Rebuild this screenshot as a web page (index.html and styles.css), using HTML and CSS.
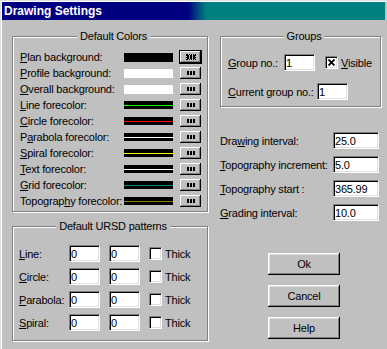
FILE: index.html
```html
<!DOCTYPE html>
<html lang="en">
<head>
    <meta charset="UTF-8">
    <title>Drawing Settings</title>
    <link rel="stylesheet" href="styles.css">
</head>
<body>
    <div class="dialog">
        <div class="titlebar">Drawing Settings</div>
        <div class="dialog-body">
            <div class="col-left">
                <fieldset class="group colors">
                    <legend>Default Colors</legend>
                    <div class="color-row"><span class="lbl"><u>P</u>lan background:</span><span class="swatch black"></span><button class="dots default"><span class="focus"><i></i><i></i><i></i></span></button></div>
                    <div class="color-row"><span class="lbl"><u>P</u>rofile background:</span><span class="swatch white"></span><button class="dots"><i></i><i></i><i></i></button></div>
                    <div class="color-row"><span class="lbl"><u>O</u>verall background:</span><span class="swatch white"></span><button class="dots"><i></i><i></i><i></i></button></div>
                    <div class="color-row"><span class="lbl"><u>L</u>ine forecolor:</span><span class="swatch line green"></span><button class="dots"><i></i><i></i><i></i></button></div>
                    <div class="color-row"><span class="lbl"><u>C</u>ircle forecolor:</span><span class="swatch line red"></span><button class="dots"><i></i><i></i><i></i></button></div>
                    <div class="color-row"><span class="lbl">P<u>a</u>rabola forecolor:</span><span class="swatch line wht"></span><button class="dots"><i></i><i></i><i></i></button></div>
                    <div class="color-row"><span class="lbl"><u>S</u>piral forecolor:</span><span class="swatch line yellow"></span><button class="dots"><i></i><i></i><i></i></button></div>
                    <div class="color-row"><span class="lbl"><u>T</u>ext forecolor:</span><span class="swatch line wht"></span><button class="dots"><i></i><i></i><i></i></button></div>
                    <div class="color-row"><span class="lbl"><u>G</u>rid forecolor:</span><span class="swatch line teal"></span><button class="dots"><i></i><i></i><i></i></button></div>
                    <div class="color-row"><span class="lbl">Topograp<u>h</u>y forecolor:</span><span class="swatch line olive"></span><button class="dots"><i></i><i></i><i></i></button></div>
                </fieldset>

                <fieldset class="group ursd">
                    <legend>Default URSD patterns</legend>
                    <div class="pat-row"><span class="lbl"><u>L</u>ine:</span><input class="field" type="text" value="0"><input class="field" type="text" value="0"><span class="check"></span><span>Thick</span></div>
                    <div class="pat-row"><span class="lbl"><u>C</u>ircle:</span><input class="field" type="text" value="0"><input class="field" type="text" value="0"><span class="check"></span><span>Thick</span></div>
                    <div class="pat-row"><span class="lbl"><u>P</u>arabola:</span><input class="field" type="text" value="0"><input class="field" type="text" value="0"><span class="check"></span><span>Thick</span></div>
                    <div class="pat-row"><span class="lbl"><u>S</u>piral:</span><input class="field" type="text" value="0"><input class="field" type="text" value="0"><span class="check"></span><span>Thick</span></div>
                </fieldset>
            </div>

            <div class="col-right">
                <fieldset class="group groups">
                    <legend>Groups</legend>
                    <div class="grp-row">
                        <span class="lbl-group"><u>G</u>roup no.:</span>
                        <input class="field" type="text" value="1">
                        <span class="check checked">
                            <svg width="7" height="7" viewBox="0 0 7 7"><path d="M0.5 0.5 L6.5 6.5 M6.5 0.5 L0.5 6.5" stroke="#000" stroke-width="1.8"/></svg>
                        </span>
                        <span><u>V</u>isible</span>
                    </div>
                    <div class="grp-row">
                        <span class="lbl-current"><u>C</u>urrent group no.:</span>
                        <input class="field" type="text" value="1">
                    </div>
                </fieldset>

                <div class="fields">
                    <div class="field-row"><span class="lbl">Dra<u>w</u>ing interval:</span><input class="field wide" type="text" value="25.0"></div>
                    <div class="field-row"><span class="lbl"><u>T</u>opography increment:</span><input class="field wide" type="text" value="5.0"></div>
                    <div class="field-row"><span class="lbl"><u>T</u>opography start :</span><input class="field wide" type="text" value="365.99"></div>
                    <div class="field-row"><span class="lbl"><u>G</u>rading interval:</span><input class="field wide" type="text" value="10.0"></div>
                </div>

                <div class="actions">
                    <button class="btn">Ok</button>
                    <button class="btn">Cancel</button>
                    <button class="btn">Help</button>
                </div>
            </div>
        </div>
    </div>
</body>
</html>
```

FILE: styles.css
```css
body {
    margin: 0;
    background-color: #c0c0c0;
    font-family: "Liberation Sans", Arial, sans-serif;
    font-size: 11px;
    letter-spacing: -0.2px;
    color: #000;
}
.dialog {
    width: 387px;
    height: 349px;
    padding: 2px 2px 0 2px;
    box-sizing: border-box;
    box-shadow: inset 1px 1px 0 #dfdfdf, inset 2px 2px 0 #fff;
}
.titlebar {
    height: 18px;
    line-height: 18px;
    padding-left: 2px;
    color: #fff;
    font-weight: bold;
    font-size: 12px;
    letter-spacing: 0;
    background: linear-gradient(to right, #000080 0, #000080 186px, #008080 204px, #008080 100%);
}
.dialog-body {
    display: flex;
    padding-top: 10px;
}
u {
    text-decoration: underline;
    text-underline-offset: 1px;
}

/* group boxes */
.group {
    margin: 0;
    padding: 0;
    border: 1px solid #808080;
    box-shadow: inset 1px 1px 0 #fff, 1px 1px 0 #fff;
    min-width: 0;
}
.group legend {
    margin: 0 auto;
    padding: 0 3px;
    line-height: 13px;
    background-color: #c0c0c0;
}

/* left column */
.col-left {
    margin-left: 10px;
    width: 196px;
    display: flex;
    flex-direction: column;
    gap: 8px;
}
.colors {
    padding: 6px 0 2px 7px;
}
.color-row {
    display: flex;
    align-items: center;
    height: 16px;
}
.color-row .lbl {
    width: 104px;
    flex-shrink: 0;
    white-space: nowrap;
}
.swatch {
    width: 49px;
    height: 9px;
    flex-shrink: 0;
}
.swatch.black { background-color: #000; }
.swatch.white { background-color: #fff; }
.swatch.line {
    height: 8px;
    background: linear-gradient(#000 0, #000 4px, var(--c) 4px, var(--c) 5px, #000 5px);
}
.swatch.green { --c: #00ff00; }
.swatch.red { --c: #ff0000; }
.swatch.wht { --c: #ffffff; }
.swatch.yellow { --c: #ffff00; }
.swatch.teal { --c: #008080; }
.swatch.olive { --c: #808000; }

.dots {
    margin-left: 7px;
    width: 21px;
    height: 12px;
    flex-shrink: 0;
    padding: 0;
    border: 0;
    background-color: #c0c0c0;
    box-shadow: inset -1px -1px 0 #000, inset 1px 1px 0 #fff, inset -2px -2px 0 #808080;
    display: flex;
    justify-content: center;
    align-items: center;
    gap: 1px;
}
.dots i {
    display: block;
    width: 2px;
    height: 4px;
    background-color: #000;
}
.dots.default {
    outline: 1px solid #000;
}
.dots .focus {
    display: flex;
    gap: 1px;
    padding: 1px;
    outline: 1px dotted #000;
    outline-offset: -1px;
}

.ursd {
    padding: 12px 0 9px 6px;
    display: flex;
    flex-direction: column;
    gap: 6px;
}
.pat-row {
    display: flex;
    align-items: center;
    height: 17px;
}
.pat-row .lbl {
    width: 50px;
    white-space: nowrap;
}
.pat-row .field + .field {
    margin-left: 9px;
}
.pat-row .check {
    margin-left: 9px;
    margin-right: 3px;
}

/* inputs */
.field {
    width: 31px;
    height: 17px;
    flex-shrink: 0;
    box-sizing: border-box;
    margin: 0;
    padding: 0 1px;
    border: 1px solid;
    border-color: #808080 #fff #fff #808080;
    box-shadow: inset 1px 1px 0 #000, inset -1px -1px 0 #dfdfdf;
    background-color: #fff;
    font-family: "Liberation Sans", Arial, sans-serif;
    font-size: 11px;
    letter-spacing: -0.2px;
    color: #000;
    outline: none;
}
.field.wide {
    width: 46px;
}
.check {
    width: 13px;
    height: 13px;
    flex-shrink: 0;
    box-sizing: border-box;
    border: 1px solid;
    border-color: #808080 #fff #fff #808080;
    box-shadow: inset 1px 1px 0 #000, inset -1px -1px 0 #dfdfdf;
    background-color: #fff;
    display: flex;
    justify-content: center;
    align-items: center;
}

/* right column */
.col-right {
    margin-left: 12px;
    width: 161px;
    display: flex;
    flex-direction: column;
}
.groups {
    padding: 11px 0 6px 7px;
    display: flex;
    flex-direction: column;
    gap: 12px;
}
.grp-row {
    display: flex;
    align-items: center;
    height: 17px;
    white-space: nowrap;
}
.lbl-group {
    width: 56px;
}
.grp-row .check {
    margin-left: 10px;
    margin-right: 3px;
}
.lbl-current {
    width: 89px;
}
.fields {
    margin-top: 25px;
    display: flex;
    flex-direction: column;
    gap: 7px;
}
.field-row {
    display: flex;
    align-items: center;
    height: 17px;
}
.field-row .lbl {
    width: 113px;
    white-space: nowrap;
}
.actions {
    margin-top: 32px;
    margin-left: 48px;
    display: flex;
    flex-direction: column;
    gap: 10px;
}
.btn {
    width: 72px;
    height: 22px;
    padding: 0;
    border: 0;
    background-color: #c0c0c0;
    box-shadow: inset -1px -1px 0 #000, inset 1px 1px 0 #fff, inset -2px -2px 0 #808080, inset 2px 2px 0 #dfdfdf;
    font-family: "Liberation Sans", Arial, sans-serif;
    font-size: 11px;
    font-weight: 400;
    letter-spacing: -0.2px;
    color: #000;
}
```
